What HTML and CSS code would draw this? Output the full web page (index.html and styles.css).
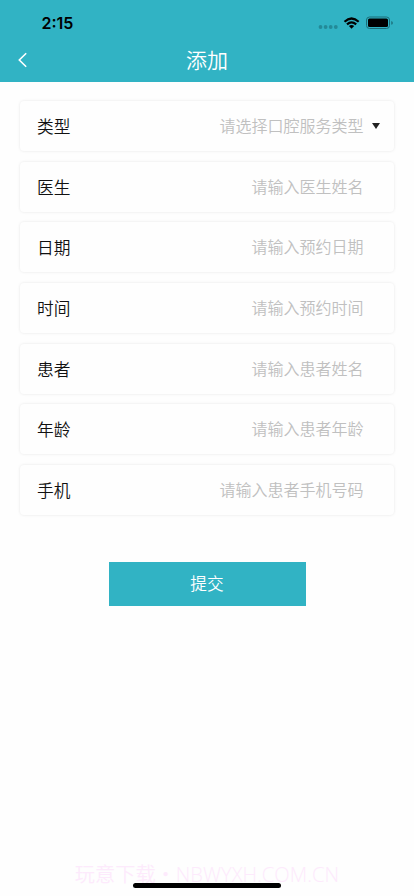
FILE: index.html
```html
<!DOCTYPE html>
<html lang="zh-CN">
<head>
<meta charset="utf-8">
<meta name="viewport" content="width=device-width, initial-scale=1">
<title>添加</title>
<link rel="stylesheet" href="styles.css">
</head>
<body>
<header class="header">
  <div class="status">
    <span class="time">2:15</span>
    <svg class="signals" width="76" height="16" viewBox="0 0 76 16">
      <g fill="#238a98"><circle cx="2.5" cy="11" r="1.9"/><circle cx="7.6" cy="11" r="1.9"/><circle cx="12.7" cy="11" r="1.9"/><circle cx="17.8" cy="11" r="1.9"/></g>
      <g fill="none" stroke="#000" stroke-width="2.2"><path d="M26.5 5.7Q33.5-.7 40.700 5.700"/><path d="M29 8.400Q33.500 4.300 38.200 8.400"/></g>
      <path d="M30.900 10.100Q33.500 8 36.200 10.100L33.550 12.700Z"/>
      <rect x="48.500" y="1" width="23" height="11.500" rx="3" fill="none" stroke="#1b6d78"/>
      <rect x="50" y="2.500" width="20" height="8.500" rx="1.500"/>
      <path d="M73.300 5Q74.800 5.500 74.800 6.900T73.300 8.800Z" fill="#1b6d78"/>
    </svg>
  </div>
  <div class="nav">
    <svg class="back" width="10" height="16" viewBox="0 0 10 16"><path d="M8.200 1.200L1.300 8L8.200 14.800" fill="none" stroke="#fff" stroke-width="1.600"/></svg>
    <h1 class="title">添加</h1>
  </div>
</header>
<main class="form">
  <div class="field"><span class="label">类型</span><span class="hint">请选择口腔服务类型</span><svg class="arrow" width="8" height="6" viewBox="0 0 8 6"><path d="M0 0H8L4 6Z" fill="#222"/></svg></div>
  <div class="field"><span class="label">医生</span><span class="hint">请输入医生姓名</span></div>
  <div class="field"><span class="label">日期</span><span class="hint">请输入预约日期</span></div>
  <div class="field"><span class="label">时间</span><span class="hint">请输入预约时间</span></div>
  <div class="field"><span class="label">患者</span><span class="hint">请输入患者姓名</span></div>
  <div class="field"><span class="label">年龄</span><span class="hint">请输入患者年龄</span></div>
  <div class="field"><span class="label">手机</span><span class="hint">请输入患者手机号码</span></div>
  <button class="submit">提交</button>
</main>
<footer class="footer">
  <span class="site">玩意下载・NBWYXH.COM.CN</span>
  <span class="home-bar"></span>
</footer>
</body>
</html>
```
FILE: styles.css
```css
* { box-sizing: border-box; }
body {
  margin: 0;
  height: 896px;
  display: flex;
  flex-direction: column;
  overflow: hidden;
  background: #fefefe;
  font-family: "Noto Sans CJK SC", sans-serif;
}
.header { height: 82px; flex: none; background: #31b3c4; }
.status {
  height: 44px;
  padding: 1px 20px 0 41.500px;
  display: flex;
  align-items: center;
  justify-content: space-between;
}
.time { font: 600 16px/20px Inter, sans-serif; }
.signals { display: block; margin-top: 2px; }
.nav {
  height: 32px;
  display: grid;
  grid-template-columns: 40px 1fr 40px;
  align-items: center;
}
.back { margin-left: 17.500px; }
.title {
  margin: 0;
  padding-bottom: 2px;
  color: #fff;
  font-size: 21px;
  line-height: 30px;
  font-weight: 350;
  text-align: center;
}
.form {
  flex: 1;
  padding: 19px 20px 0;
  display: flex;
  flex-direction: column;
  gap: 10.700px;
}
.field {
  height: 50px;
  flex: none;
  padding: 0 30.500px 0 17px;
  display: flex;
  align-items: center;
  justify-content: space-between;
  position: relative;
  border-radius: 4px;
  background: #fefefe;
  box-shadow: 0 0 3px rgba(0, 0, 0, .1);
}
.label { color: #111; font-size: 16.700px; line-height: 24px; font-weight: 350; }
.hint { padding-bottom: 2px; color: #c0c0c0; font-size: 16px; line-height: 24px; font-weight: 350; }
.arrow { position: absolute; right: 14px; top: 22px; }
.submit {
  width: 197px;
  height: 44px;
  flex: none;
  margin: 36px auto 0;
  padding: 0 0 2px;
  border: 0;
  background: #31b3c4;
  color: #fff;
  font: 350 16.700px/24px "Noto Sans CJK SC", sans-serif;
}
.footer {
  position: relative;
  height: 36px;
  display: flex;
  justify-content: center;
}
.site { color: #fdeafc; font: 350 20.200px/28px "Open Sans", "Noto Sans CJK SC", sans-serif; white-space: nowrap; }
.home-bar {
  position: absolute;
  left: 133px;
  top: 22.500px;
  width: 148px;
  height: 5px;
  border-radius: 3px;
  background: #000;
}
```
